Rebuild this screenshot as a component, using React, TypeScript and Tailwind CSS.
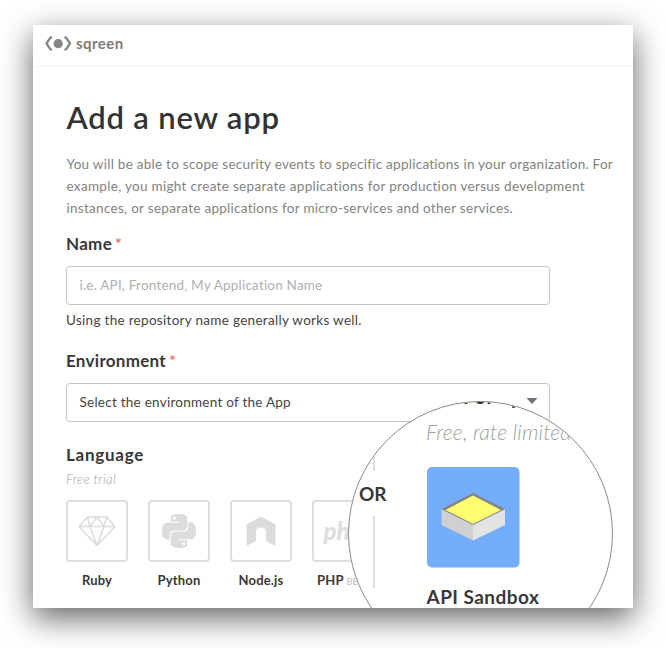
import React from "react";

const Star = () => <span className="ml-[3px] mt-[2px] text-[16px] font-bold leading-none tracking-normal text-[#e8736e]">*</span>;

function Tile({ label, badge, children }: { label: string; badge?: string; children: React.ReactNode }) {
  return (
    <div className="flex w-[62px] shrink-0 flex-col">
      <div className="flex h-[62px] items-center justify-center rounded-[4px] border-2 border-[#dedede]">{children}</div>
      <div className="mt-[9px] flex h-[18px] items-baseline justify-center whitespace-nowrap text-[13px] font-bold leading-[18px] tracking-[0.15px] text-[#383838]">
        {label}
        {badge && <span className="ml-[3px] text-[9px] font-normal text-[#bdbdbd]">{badge}</span>}
      </div>
    </div>
  );
}

function Ruby() {
  return (
    <svg width="38" height="30" viewBox="0 0 38 30" fill="none" stroke="#dcdcdc" strokeWidth="1.5" strokeLinejoin="round">
      <path d="M9.5 1H28.500L37 10.500L19 29.500L1 10.500ZM1 10.500H37M9.500 1L12 10.500L19 29.500L26 10.500L28.500 1M12 10.500L19 1L26 10.500" />
    </svg>
  );
}

function Python() {
  return (
    <svg width="34" height="34" viewBox="0 0 24 24" fill="#dcdcdc">
      <path d="M14.250.180l.9.200.730.260.590.300.450.320.340.340.250.340.160.330.100.300.040.260.020.200-.010.130V8.500l-.050.630-.130.550-.210.460-.260.380-.300.310-.330.250-.350.190-.350.140-.330.100-.300.070-.260.040-.210.020H8.770l-.690.050-.590.140-.500.220-.410.270-.330.320-.270.350-.200.360-.150.370-.100.350-.070.320-.040.270-.020.210v3.060H3.170l-.210-.030-.280-.070-.320-.120-.350-.180-.360-.260-.360-.360-.350-.460-.320-.590-.280-.730-.210-.880-.140-1.050-.050-1.230.060-1.220.160-1.040.240-.870.320-.710.360-.570.400-.440.420-.330.420-.240.400-.160.360-.100.320-.050.240-.010h.160l.060.010h8.160v-.830H6.180l-.010-2.750-.020-.370.050-.340.110-.310.170-.280.250-.260.310-.230.380-.200.440-.180.510-.150.580-.120.640-.100.710-.060.770-.040.840-.020 1.270.050zm-6.300 1.980l-.230.330-.080.410.080.410.230.340.330.220.410.090.410-.090.330-.220.230-.340.080-.410-.080-.410-.230-.330-.330-.220-.410-.090-.410.090zm13.090 3.950l.280.060.320.120.350.180.360.270.360.350.350.470.320.590.280.730.210.880.140 1.040.050 1.230-.060 1.230-.160 1.040-.240.860-.320.710-.360.570-.400.450-.420.330-.420.240-.400.160-.360.090-.320.050-.240.020-.160-.010h-8.220v.820h5.840l.010 2.760.020.360-.050.340-.110.310-.170.290-.250.250-.310.240-.380.200-.440.170-.510.150-.580.130-.640.090-.710.070-.770.040-.840.010-1.270-.040-1.070-.140-.900-.200-.730-.250-.590-.300-.450-.330-.340-.340-.250-.340-.160-.330-.100-.300-.040-.250-.020-.200.010-.130v-5.340l.050-.640.130-.540.210-.460.260-.380.300-.320.330-.240.350-.200.350-.140.330-.100.300-.060.260-.040.210-.020.130-.010h5.840l.690-.050.590-.140.500-.210.410-.280.330-.320.270-.350.200-.360.150-.360.100-.350.070-.320.040-.280.020-.210V6.070h2.090l.140.010zm-6.470 14.250l-.230.330-.080.410.080.410.230.330.330.230.410.080.410-.080.330-.230.230-.330.080-.410-.080-.410-.230-.330-.330-.230-.410-.080-.410.080z" />
    </svg>
  );
}

function Lens() {
  return (
    <div className="absolute left-[315px] top-[376px] h-[265px] w-[265px] overflow-hidden rounded-full border border-[#8a8a8a] bg-white">
      <div className="absolute left-[114px] top-[-18px] whitespace-nowrap text-[20px] font-bold leading-[24px] tracking-[0.8px] text-[#333]">For app</div>
      <div className="absolute left-[77px] top-[18px] whitespace-nowrap text-[21px] font-light italic leading-[24px] tracking-[0.2px] text-[#a0a0a0]">Free, rate limited</div>
      <div className="absolute left-[24px] top-0 h-[69px] w-[2px] bg-[#dedede]" />
      <div className="absolute left-[10px] top-[80px] text-[19px] font-bold leading-[24px] text-[#383838]">OR</div>
      <div className="absolute left-[24px] top-[114px] h-[72px] w-[2px] bg-[#dedede]" />
      <svg className="absolute left-[78px] top-[65px]" width="93" height="101" viewBox="0 0 93 101">
        <rect width="92.500" height="100.500" rx="5" fill="#74adf9" />
        <path d="M14.500 42L46 26L78 42L46 58Z" fill="#858585" />
        <path d="M18.500 43L46 28.500L74 43L46 57Z" fill="#ffff70" />
        <path d="M14.500 42L46 58V73.500L14.500 58Z" fill="#d0d0d0" />
        <path d="M78 42L46 58V73.500L78 58Z" fill="#e3e3e3" />
        <path d="M14.500 42L46 57.500L78 42" fill="none" stroke="#999" strokeWidth=".8" />
      </svg>
      <div className="absolute left-[77.5px] top-[183px] whitespace-nowrap text-[19px] font-bold leading-[24px] tracking-[0.45px] text-[#383838]">API Sandbox</div>
    </div>
  );
}

export default function App() {
  return (
    <div className="h-[648px] w-[665px] overflow-hidden bg-white pl-[33px] pt-[25px] font-['Lato',sans-serif]">
      <main className="relative h-[583px] w-[600px] bg-white shadow-[0_10px_30px_rgba(0,0,0,0.62)]">
        <div className="h-full overflow-hidden">
          <header className="flex h-[42px] items-center border-b border-[#f5f5f5] pb-[4px] pl-[12px]">
            <svg width="27" height="15" viewBox="0 0 27 15" fill="none" stroke="#858585" strokeWidth="2.3">
              <path d="M7 1Q5.500 1.300 4.500 3L1.500 7.500L4.500 12Q5.500 13.700 7 14M19.500 1Q21 1.300 22 3L25 7.500L22 12Q21 13.700 19.500 14" />
              <circle cx="13.200" cy="7.700" r="4.600" fill="#858585" stroke="none" />
            </svg>
            <span className="mb-[2px] ml-[4px] text-[15px] font-bold leading-[18px] tracking-[0.45px] text-[#7d7d7d]">sqreen</span>
          </header>
          <div className="pl-[33px]">
            <h1 className="mt-[30px] h-[40px] whitespace-nowrap pl-[0.5px] text-[31px] font-semibold leading-[40px] tracking-[0.8px] text-[#333]">Add a new app</h1>
            <p className="mt-[16px] whitespace-nowrap pl-[0.5px] text-[13.500px] leading-[22px] text-[#828282]">
              <span className="tracking-[0.26px]">You will be able to scope security events to specific applications in your organization. For</span><br />
              <span className="tracking-[0.31px]">example, you might create separate applications for production versus development</span><br />
              <span className="tracking-[0.285px]">instances, or separate applications for micro-services and other services.</span>
            </p>
            <h2 className="mt-[14px] flex h-[22px] text-[17px] font-bold leading-[22px] tracking-[0.3px] text-[#383838]">Name<Star /></h2>
            <div className="mt-[11px] flex h-[39px] w-[484px] items-center rounded-[4px] border border-[#c4c4c4] pl-[12.5px] text-[13.500px] text-[#b0b0b0]">
              <span className="tracking-[0.2px]">i.e. API, Frontend, My Application Name</span>
            </div>
            <p className="mt-[5px] h-[20px] text-[13.500px] leading-[20px] tracking-[0.3px] text-[#444]">Using the repository name generally works well.</p>
            <h2 className="mt-[20px] flex h-[22px] text-[17px] font-bold leading-[22px] tracking-[0.28px] text-[#383838]">Environment<Star /></h2>
            <div className="mt-[11px] flex h-[39px] w-[484px] items-center rounded-[4px] border border-[#c4c4c4] pl-[12.5px] pr-[11px] text-[13.500px] tracking-[0.25px] text-[#444]">
              <span className="grow">Select the environment of the App</span>
              <svg className="mb-[3px]" width="12" height="6" viewBox="0 0 12 6" fill="#6b7080"><path d="M.5 0H11.500L6 6Z" /></svg>
            </div>
            <h2 className="mt-[22px] h-[22px] text-[17px] font-bold leading-[22px] tracking-[0.75px] text-[#383838]">Language</h2>
            <p className="mt-[4px] h-[18px] text-[13px] font-light italic leading-[18px] tracking-[0.4px] text-[#a0a0a0]">Free trial</p>
            <div className="mt-[12px] flex gap-[20px]">
              <Tile label="Ruby"><Ruby /></Tile>
              <Tile label="Python"><Python /></Tile>
              <Tile label="Node.js">
                <svg width="30" height="30" viewBox="0 0 30 30" fill="#dcdcdc">
                  <path d="M15 .5L29.500 8.500V30L20 25V15.500Q20 11.500 15 11.500T10 15.500V25L.5 30V8.500Z" />
                </svg>
              </Tile>
              <Tile label="PHP" badge="BETA"><span className="text-[24px] font-black italic leading-none text-[#dedede]">php</span></Tile>
            </div>
          </div>
        </div>
        <div className="absolute inset-0 overflow-hidden"><Lens /></div>
      </main>
    </div>
  );
}
